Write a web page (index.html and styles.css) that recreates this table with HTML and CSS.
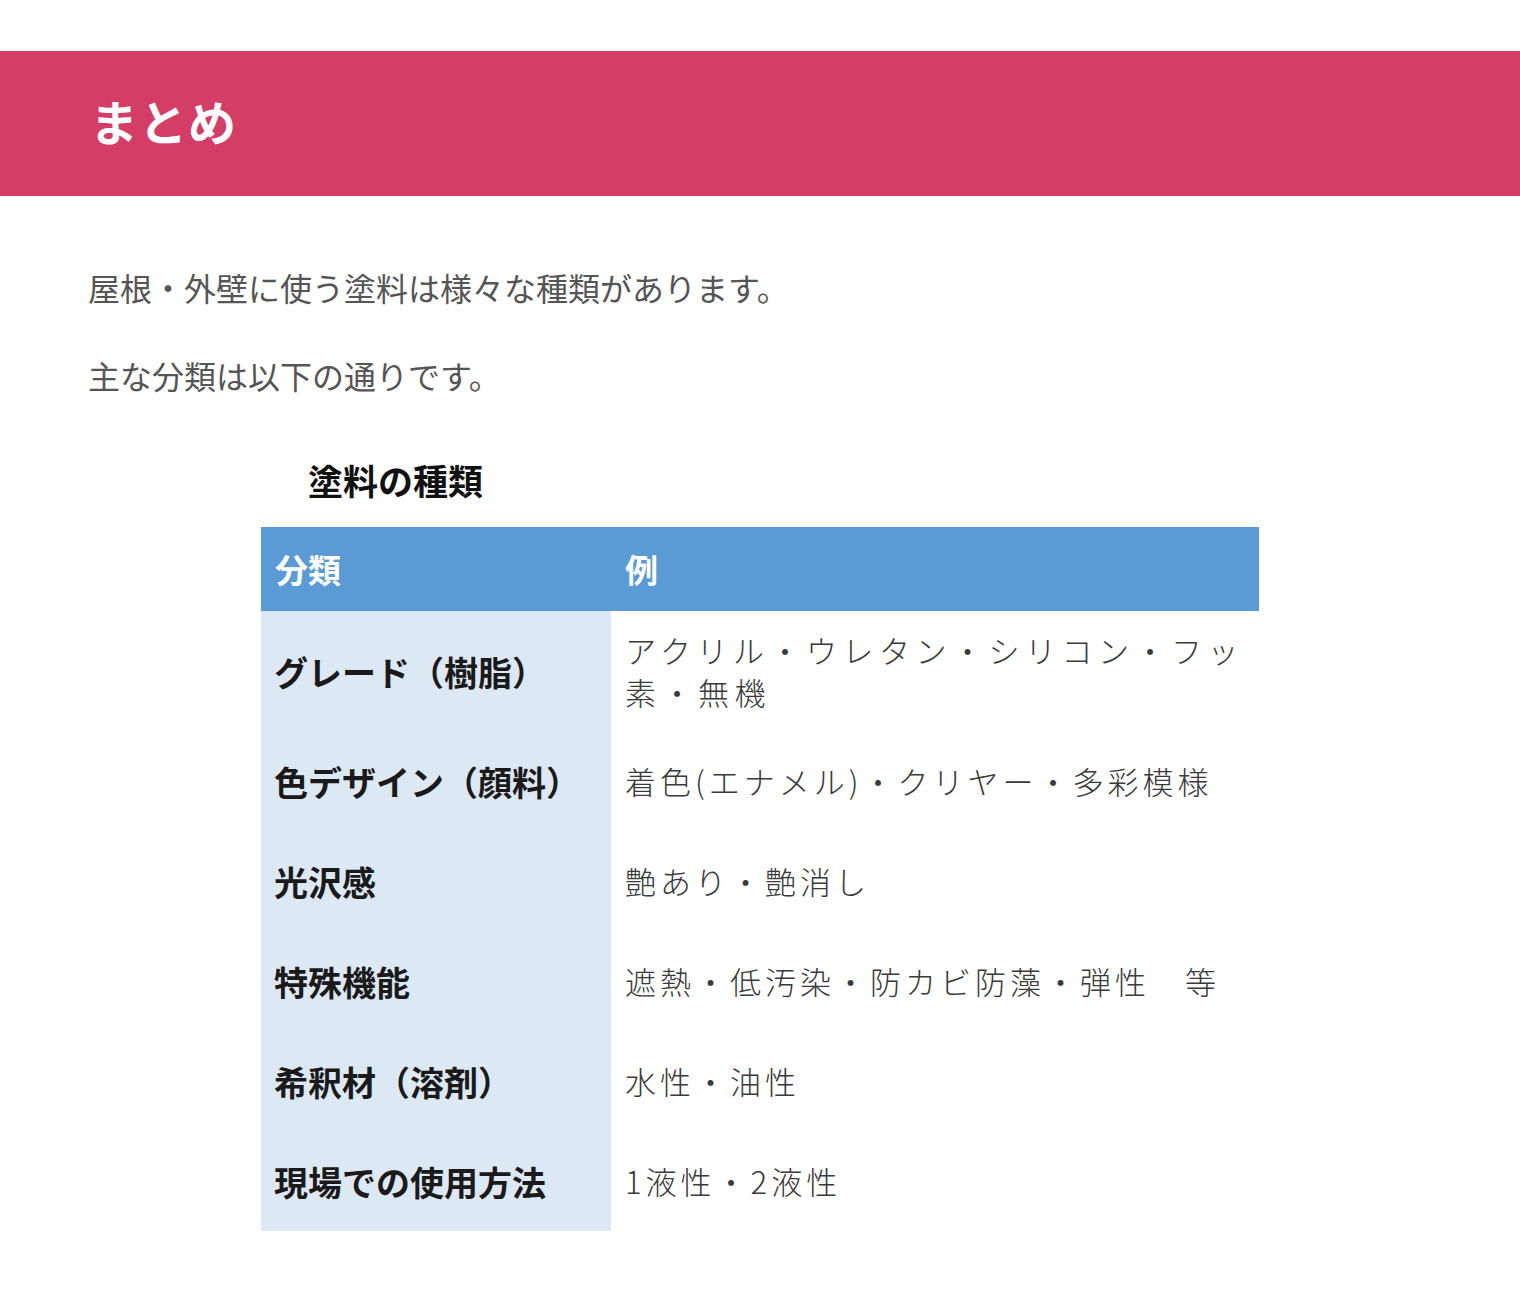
FILE: index.html
```html
<!DOCTYPE html>
<html lang="ja">
<head>
  <meta charset="UTF-8" />
  <meta name="viewport" content="width=device-width, initial-scale=1" />
  <title>まとめ</title>
  <link rel="stylesheet" href="styles.css">
</head>
<body>
  <main class="article">
    <h2 class="section-title">まとめ</h2>

    <div class="body-text">
      <p>屋根・外壁に使う塗料は様々な種類があります。</p>
      <p>主な分類は以下の通りです。</p>
    </div>

    <figure class="paint-table">
      <figcaption>塗料の種類</figcaption>
      <table>
        <thead>
          <tr>
            <th class="col-kind">分類</th>
            <th>例</th>
          </tr>
        </thead>
        <tbody>
          <tr class="tall">
            <th class="col-kind">グレード（樹脂）</th>
            <td class="wide">アクリル・ウレタン・シリコン・フッ素・無機</td>
          </tr>
          <tr>
            <th class="col-kind">色デザイン（顔料）</th>
            <td>着色(エナメル)・クリヤー・多彩模様</td>
          </tr>
          <tr>
            <th class="col-kind">光沢感</th>
            <td>艶あり・艶消し</td>
          </tr>
          <tr>
            <th class="col-kind">特殊機能</th>
            <td>遮熱・低汚染・防カビ防藻・弾性　等</td>
          </tr>
          <tr>
            <th class="col-kind">希釈材（溶剤）</th>
            <td>水性・油性</td>
          </tr>
          <tr>
            <th class="col-kind">現場での使用方法</th>
            <td>1液性・2液性</td>
          </tr>
        </tbody>
      </table>
    </figure>
  </main>
</body>
</html>
```

FILE: styles.css
```css
/* ベース */
* {
  box-sizing: border-box;
}
body {
  margin: 0;
  background: #ffffff;
  font-family: "Noto Sans CJK JP", "Noto Sans", sans-serif;
  color: #555555;
}
.article {
  padding-top: 51px;
  padding-bottom: 72px;
}

/* 見出し */
.section-title {
  margin: 0;
  height: 145px;
  display: flex;
  align-items: center;
  padding: 0 90px 8px;
  background: #d33d66;
  color: #ffffff;
  font-size: 48px;
  font-weight: 700;
  letter-spacing: 1px;
}

/* 本文 */
.body-text {
  padding: 68px 88px 0;
}
.body-text p {
  margin: 0 0 42px;
  font-size: 32px;
  line-height: 46px;
  color: #555555;
}

/* 表 */
.paint-table {
  margin: 57px 0 0 261px;
  width: 998px;
}
.paint-table figcaption {
  padding: 0 0 22px 47px;
  font-size: 35px;
  font-weight: 700;
  line-height: 50px;
  color: #111111;
}
.paint-table table {
  width: 100%;
  border-collapse: collapse;
  table-layout: fixed;
}
.paint-table thead th {
  height: 84px;
  background: #5b9bd5;
  color: #ffffff;
  font-size: 33px;
  font-weight: 700;
  text-align: left;
  padding: 0 14px;
}
.paint-table .col-kind {
  width: 350px;
}
.paint-table tbody th {
  height: 100px;
  background: #dde8f5;
  color: #1a1a1a;
  font-size: 34px;
  font-weight: 700;
  text-align: left;
  padding: 0 13px;
  white-space: nowrap;
}
.paint-table tbody tr.tall th,
.paint-table tbody tr.tall td {
  height: 120px;
}
.paint-table tbody td {
  height: 100px;
  padding: 0 10px 0 14px;
  color: #3a3a3a;
  font-size: 31px;
  font-weight: 300;
  line-height: 42px;
  letter-spacing: 4px;
}
.paint-table tbody td.wide {
  letter-spacing: 5.5px;
}
```
